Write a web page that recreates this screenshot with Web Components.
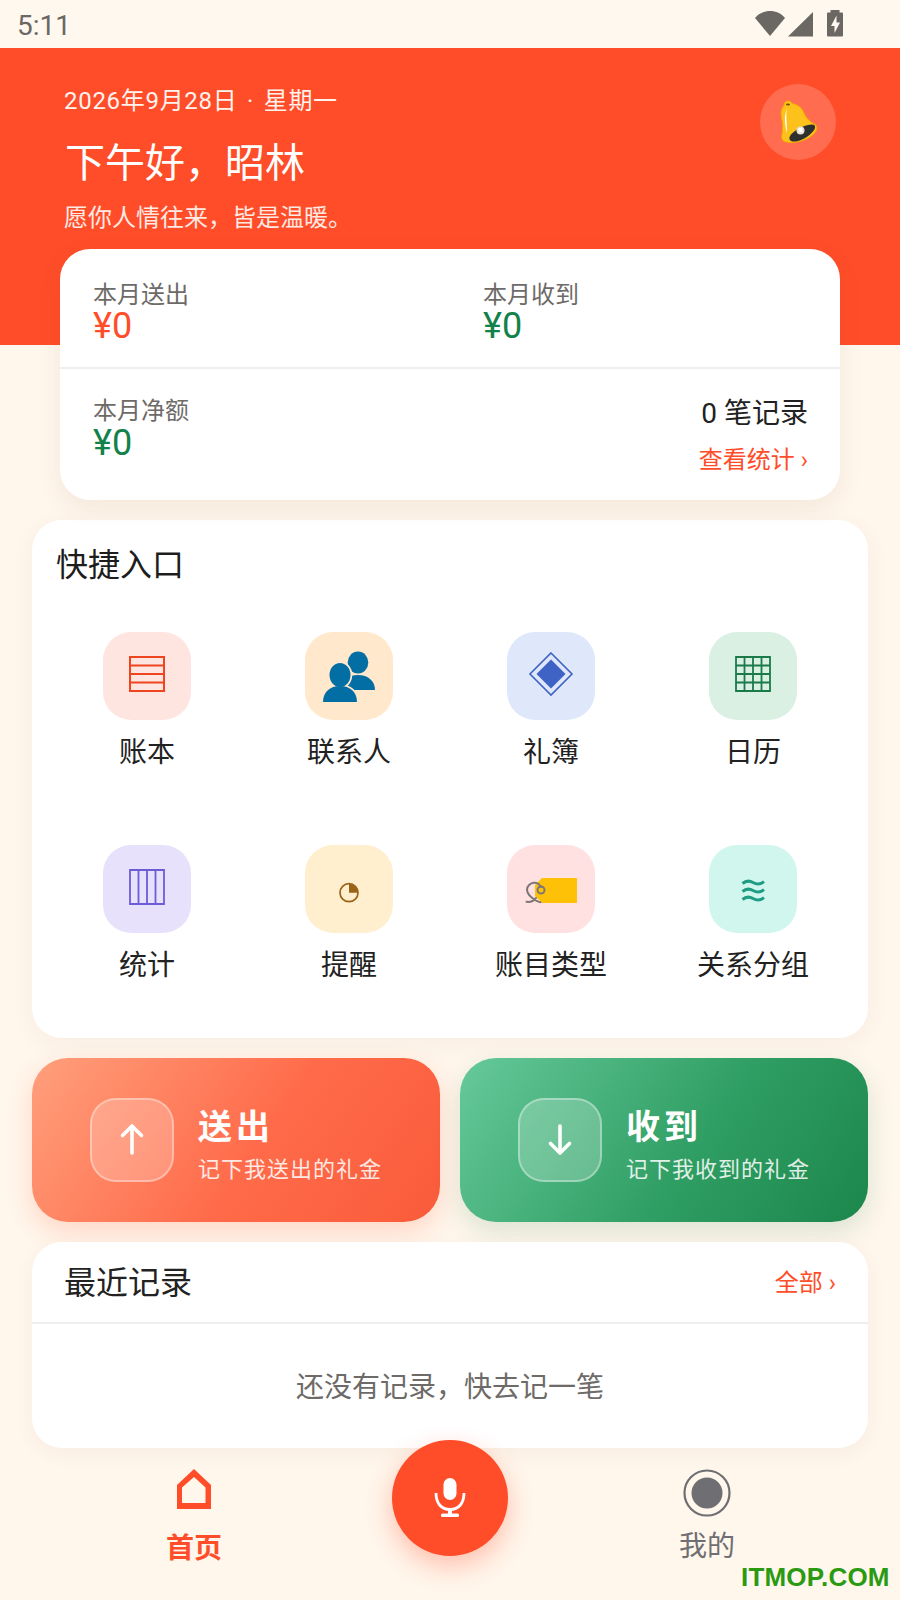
<!DOCTYPE html>
<html lang="zh">
<head>
<meta charset="utf-8">
<title>首页</title>
<style>
  html, body { margin: 0; padding: 0; background: #fff6ec; }
  body { font-family: Roboto, "Noto Sans CJK SC", sans-serif; width: 900px; height: 1600px; overflow: hidden; }
</style>
</head>
<body>
<app-shell>
  <status-bar></status-bar>
  <home-hero></home-hero>
  <summary-card></summary-card>
  <quick-panel>
    <quick-tile label="账本" bg="#ffe5df">
      <svg viewBox="0 0 88 88" fill="none" stroke="#ee4520" stroke-width="2"><path d="M27 25h34v34H27zM27 33.500h34M27 42h34M27 50.500h34"/></svg>
    </quick-tile>
    <quick-tile label="联系人" bg="#ffe8cc">
      <svg viewBox="0 0 88 88">
        <g fill="#036ea4">
          <ellipse cx="53" cy="30.500" rx="10.300" ry="11"/>
          <path d="M36 58c0-9 7-15 17-15s17 6 17 15z"/>
        </g>
        <g fill="#ffe8cc" stroke="#ffe8cc" stroke-width="3.500">
          <ellipse cx="35" cy="43" rx="10.500" ry="12"/>
          <path d="M18 70c0-10 7-16 17-16s17 6 17 16z"/>
        </g>
        <g fill="#036ea4">
          <ellipse cx="35" cy="43" rx="10.500" ry="12"/>
          <path d="M18 70c0-10 7-16 17-16s17 6 17 16z"/>
        </g>
      </svg>
    </quick-tile>
    <quick-tile label="礼簿" bg="#dfe7fb">
      <svg viewBox="0 0 88 88"><path fill="none" stroke="#3f63c4" stroke-width="1.600" d="M44 21l21 21-21 21-21-21z"/><path fill="#3f63c4" d="M44 27.500L58.500 42 44 56.500 29.500 42z"/></svg>
    </quick-tile>
    <quick-tile label="日历" bg="#d9f0e3">
      <svg viewBox="0 0 88 88" fill="none" stroke="#1a7a4a" stroke-width="1.800"><path d="M27 25h34v34H27zM27 33.500h34M27 42h34M27 50.500h34M35.500 25v34M44 25v34M52.500 25v34"/></svg>
    </quick-tile>
    <quick-tile label="统计" bg="#e7e1fb">
      <svg viewBox="0 0 88 88" fill="none" stroke="#6c5cd8" stroke-width="1.800"><path d="M27 25h34v34H27zM35.500 25v34M44 25v34M52.500 25v34"/></svg>
    </quick-tile>
    <quick-tile label="提醒" bg="#ffefcf">
      <svg viewBox="0 0 88 88"><circle cx="44" cy="47.700" r="9" fill="none" stroke="#9a6418" stroke-width="1.700"/><path fill="#9a6418" d="M44 38.700a9 9 0 0 1 9 9h-9z"/></svg>
    </quick-tile>
    <quick-tile label="账目类型" bg="#ffe1e1">
      <svg viewBox="0 0 88 88"><path fill="#ffc107" d="M35 33h34c.600 0 1 .400 1 1v23c0 .600-.400 1-1 1H35l-7-7V40z"/><circle cx="34" cy="45" r="3.500" fill="none" stroke="#7d7676" stroke-width="2"/><path fill="none" stroke="#7d7676" stroke-width="2" stroke-linecap="round" d="M34 42c-1.500-3-4-4.500-7-4.300-3.800.300-7 3.300-7 7 0 4.300 4 8 10 11.300 1.300.800 2.800 1.300 3.500 1.300M29 53c-1.500 1.700-3 3-4.500 3.500-1.200.400-3 .500-5 .300"/></svg>
    </quick-tile>
    <quick-tile label="关系分组" bg="#d1f6ee">
      <svg viewBox="0 0 88 88" fill="none" stroke="#1f9d84" stroke-width="3"><path d="M33.500 38.500c3.500-3 7-3 10.500-1s7.500 2 11-.8M33.500 46.500c3.500-3 7-3 10.500-1s7.500 2 11-.8M33.500 54.500c3.500-3 7-3 10.500-1s7.500 2 11-.8"/></svg>
    </quick-tile>
  </quick-panel>
  <action-row>
    <action-button tone="out" title="送出" sub="记下我送出的礼金"></action-button>
    <action-button tone="in" title="收到" sub="记下我收到的礼金"></action-button>
  </action-row>
  <recent-card></recent-card>
  <bottom-nav></bottom-nav>
</app-shell>

<script>
class AppShell extends HTMLElement {
  constructor() {
    super()
    this.attachShadow({ mode: "open" }).innerHTML = `
      <style>
        :host { display: block; position: relative; width: 900px; height: 1600px; overflow: hidden; background: #fff6ec; }
        .mark {
          position: absolute; left: 741px; top: 1562px;
          font: bold 26px/30px "Liberation Sans", sans-serif; letter-spacing: .2px; color: #2a9a12;
        }
      </style>
      <slot></slot>
      <div class="mark">ITMOP.COM</div>`
  }
}

class StatusBar extends HTMLElement {
  constructor() {
    super()
    this.attachShadow({ mode: "open" }).innerHTML = `
      <style>
        :host { display: flex; align-items: center; height: 48px; background: #fff8ef; color: #6b6864; box-sizing: border-box; padding: 0 54px 0 17px; }
        .time { font: 400 28px/52px Roboto, sans-serif; flex: 1; height: 48px; }
        svg { display: block; }
        .icons { display: flex; }
      </style>
      <span class="time">5:11</span>
      <div class="icons">
        <svg width="58" height="48" viewBox="0 0 58 48" fill="#6b6864">
          <path d="M0 18C3.500 13.500 9 11 15 11s11.500 2.500 15 7L15 36z"/>
          <path d="M33 36.500L58 12v24.500z"/>
        </svg>
        <svg width="22" height="48" viewBox="0 0 22 48" style="margin-left:11px">
          <path fill="#6b6864" d="M6.500 10h9v2.500H18c.500 0 1 .500 1 1v22c0 .500-.500 1-1 1H4c-.500 0-1-.500-1-1v-22c0-.500.500-1 1-1h2.500z"/>
          <path fill="#fff8ef" d="M12.500 15.500L7 26h3.500v7l5.500-10.500h-3.500z"/>
        </svg>
      </div>`
  }
}

class HomeHero extends HTMLElement {
  constructor() {
    super()
    this.attachShadow({ mode: "open" }).innerHTML = `
      <style>
        :host { display: flex; height: 297px; box-sizing: border-box; background: #ff4d29; color: #fff; padding: 35px 64px 0 64px; }
        .text { flex: 1; }
        .date { font-size: 24px; line-height: 36px; letter-spacing: .7px; color: #fff3ee; }
        .date i { font-style: normal; margin: 0 3px; }
        h1 { margin: 18px 0 0 1px; font-size: 40px; font-weight: 400; line-height: 54px; letter-spacing: 0; }
        p { margin: 10px 0 0; font-size: 24px; line-height: 34px; color: #ffe9e3; }
        .bell { width: 76px; height: 76px; margin-top: 1px; border-radius: 50%; background: #ff6c4f; display: flex; align-items: center; justify-content: center; }
      </style>
      <div class="text">
        <div class="date">2026年9月28日<i> · </i>星期一</div>
        <h1>下午好，昭林</h1>
        <p>愿你人情往来，皆是温暖。</p>
      </div>
      <div class="bell">
        <svg width="76" height="76" viewBox="0 2 76 76">
          <path fill="#fcc21b" stroke="#f2a900" stroke-width="1" d="M24 24c-.500-2.500 1.500-5 4-5 2 0 3.500 1 4 2.500 6 1 10 4.500 12 9.500 2.500 6 6.500 9 11 11.500 2 1.300 2.500 3.500 1 6.500-3 6-14 11-23 11.500-5 .300-9-.500-10.500-2.500-1-1.500-1-3.500-.500-6 1-5 1-10-.500-16-1-5-.500-9 2.500-12.500z"/>
          <path fill="#2f2f2f" d="M31 59c-2.500-1.500-2-4.500 1-7.500 5-5 14-9 20-9 2.500 0 3.500 1.300 3 3.500-1 3.500-7 9-13 11.500-4.500 2-8.500 2.700-11 1.500z"/>
          <circle cx="40.500" cy="48.500" r="4" fill="#e8e2d0"/><circle cx="40.500" cy="48" r="2.200" fill="#fff"/>
          <path fill="#fff" d="M27 27c-1.500 6 0 12 0 24-2-6-3.500-18 0-24z"/>
          <ellipse cx="28" cy="22.500" rx="2" ry="1" fill="#6b4a10"/>
        </svg>
      </div>`
  }
}

class SummaryCard extends HTMLElement {
  constructor() {
    super()
    this.attachShadow({ mode: "open" }).innerHTML = `
      <style>
        :host { display: block; position: relative; height: 251px; margin: -96px 60px 0; box-sizing: border-box; background: #fff; border-radius: 30px; box-shadow: 0 8px 24px rgba(120, 70, 30, .08); }
        .row { display: grid; grid-template-columns: 390px 1fr; padding: 0 32px 0 33px; }
        .top { height: 120px; padding-top: 33px; box-sizing: border-box; border-bottom: 2px solid #eeeeee; }
        .bottom { padding-top: 29px; }
        .label { font-size: 24px; line-height: 27px; color: #6d6a68; }
        .val { font-size: 36px; line-height: 34px; }
        .bottom .val { line-height: 36px; }
        .red { color: #ff4d29; }
        .green { color: #12824a; }
        .right { text-align: right; }
        .count { font-size: 28px; line-height: 34px; margin-top: -1px; color: #222; }
        .link { font-size: 24px; line-height: 34px; margin-top: 12px; color: #ff4d29; }
      </style>
      <div class="row top">
        <div><div class="label">本月送出</div><div class="val red">¥0</div></div>
        <div><div class="label">本月收到</div><div class="val green">¥0</div></div>
      </div>
      <div class="row bottom">
        <div><div class="label">本月净额</div><div class="val green">¥0</div></div>
        <div class="right"><div class="count">0 笔记录</div><div class="link">查看统计 ›</div></div>
      </div>`
  }
}

class QuickPanel extends HTMLElement {
  constructor() {
    super()
    this.attachShadow({ mode: "open" }).innerHTML = `
      <style>
        :host { display: block; height: 518px; margin: 20px 32px 0; box-sizing: border-box; background: #fff; border-radius: 30px; padding: 22px 14px 0; box-shadow: 0 6px 24px rgba(120, 70, 30, .05); }
        h2 { margin: 0 0 0 10px; font-size: 32px; font-weight: 400; line-height: 46px; color: #1d1d1d; }
        .grid { display: grid; grid-template-columns: repeat(4, 202px); grid-auto-rows: 213px; margin-top: 44px; }
      </style>
      <h2>快捷入口</h2>
      <div class="grid"><slot></slot></div>`
  }
}

class QuickTile extends HTMLElement {
  constructor() {
    super()
    this.attachShadow({ mode: "open" }).innerHTML = `
      <style>
        :host { display: flex; flex-direction: column; align-items: center; }
        .box { width: 88px; height: 88px; border-radius: 28px; overflow: hidden; }
        ::slotted(svg) { display: block; width: 88px; height: 88px; }
        .name { margin-top: 13px; font-size: 28px; line-height: 40px; color: #222; }
      </style>
      <div class="box"><slot></slot></div>
      <div class="name"></div>`
  }
  connectedCallback() {
    this.shadowRoot.querySelector(".box").style.background = this.getAttribute("bg")
    this.shadowRoot.querySelector(".name").textContent = this.getAttribute("label")
  }
}

class ActionRow extends HTMLElement {
  constructor() {
    super()
    this.attachShadow({ mode: "open" }).innerHTML = `
      <style>
        :host { display: grid; grid-template-columns: 408px 408px; gap: 20px; margin: 20px 32px 0; height: 164px; }
      </style>
      <slot></slot>`
  }
}

class ActionButton extends HTMLElement {
  constructor() {
    super()
    this.attachShadow({ mode: "open" }).innerHTML = `
      <style>
        :host { display: flex; align-items: center; gap: 24px; box-sizing: border-box; padding-left: 58px; border-radius: 36px; color: #fff; }
        :host([tone="out"]) { background: linear-gradient(125deg, #ff9f7c 0%, #ff6b4a 55%, #f95b3a 100%); box-shadow: 0 10px 26px rgba(255, 90, 50, .2); }
        :host([tone="in"]) { background: linear-gradient(125deg, #66c99a 0%, #2f9e63 58%, #1c864b 100%); box-shadow: 0 10px 26px rgba(30, 130, 75, .16); }
        .ic { width: 84px; height: 84px; box-sizing: border-box; border-radius: 26px; background: rgba(255, 255, 255, .22); border: 2px solid rgba(255, 255, 255, .35); display: flex; align-items: center; justify-content: center; }
        .txt { padding-top: 12px; }
        .t { font-size: 34px; line-height: 42px; font-weight: 700; letter-spacing: 4px; }
        .s { font-size: 22px; line-height: 32px; letter-spacing: 1px; margin-top: 6px; opacity: .85; }
      </style>
      <div class="ic"><svg width="40" height="40" viewBox="0 0 40 40" fill="none" stroke="#fff" stroke-width="3.600" stroke-linecap="round" stroke-linejoin="round"></svg></div>
      <div class="txt"><div class="t"></div><div class="s"></div></div>`
  }
  connectedCallback() {
    this.shadowRoot.querySelector(".t").textContent = this.getAttribute("title")
    this.shadowRoot.querySelector(".s").textContent = this.getAttribute("sub")
    this.removeAttribute("title")
    const path = this.getAttribute("tone") === "out" ? "M20 6v27M10.500 15.500L20 6l9.500 9.500" : "M20 6v27M10.500 23.500L20 33l9.500-9.500"
    this.shadowRoot.querySelector("svg").innerHTML = `<path d="${path}"/>`
  }
}

class RecentCard extends HTMLElement {
  constructor() {
    super()
    this.attachShadow({ mode: "open" }).innerHTML = `
      <style>
        :host { display: block; position: relative; height: 206px; margin: 20px 32px 0; background: #fff; border-radius: 30px; box-shadow: 0 6px 20px rgba(120, 70, 30, .05); }
        .head { display: flex; align-items: center; justify-content: space-between; height: 82px; box-sizing: border-box; padding: 0 32px 4px; border-bottom: 2px solid #eeeeee; }
        h2 { margin: 0; font-size: 32px; font-weight: 400; color: #222; }
        a { font-size: 24px; color: #ff4d29; }
        .empty { height: 122px; display: flex; align-items: center; justify-content: center; font-size: 28px; color: #6d6a68; }
      </style>
      <div class="head"><h2>最近记录</h2><a>全部 ›</a></div>
      <div class="empty">还没有记录，快去记一笔</div>`
  }
}

class BottomNav extends HTMLElement {
  constructor() {
    super()
    this.attachShadow({ mode: "open" }).innerHTML = `
      <style>
        :host { display: grid; grid-template-columns: 1fr 128px 1fr; height: 152px; background: #fff6ec; }
        .item { display: flex; flex-direction: column; align-items: center; padding-top: 21px; }
        .item svg { display: block; }
        .home { padding-left: 2px; }
        .home span { margin-top: 20px; font-size: 28px; line-height: 40px; font-weight: 700; color: #ff4d29; }
        .me span { margin-top: 10px; font-size: 28px; line-height: 40px; color: #6f6e72; }
        .fab { width: 116px; height: 116px; margin: -8px auto 0; position: relative; border-radius: 50%; background: #ff4d29; box-shadow: 0 10px 26px rgba(255, 77, 41, .32); display: flex; align-items: center; justify-content: center; }
      </style>
      <div class="item home">
        <svg width="34" height="40" viewBox="0 0 34 40"><path fill="#ff4d29" fill-rule="evenodd" d="M17 0L34 16V40H0V16zM17 8L5 18.500V34H28.500V18.500z"/></svg>
        <span>首页</span>
      </div>
      <div class="fab">
        <svg width="40" height="40" viewBox="0 0 40 40">
          <rect x="13.500" y="0" width="13" height="22" rx="6.500" fill="#fff"/>
          <path d="M6 15c0 10 5 16.500 14 16.500S34 25 34 15" fill="none" stroke="#fff" stroke-width="2.800"/>
          <path d="M20 31v5" stroke="#fff" stroke-width="4"/>
          <rect x="11" y="35.500" width="18" height="3.600" rx="1.500" fill="#fff"/>
        </svg>
      </div>
      <div class="item me">
        <svg width="48" height="48" viewBox="0 0 48 48"><circle cx="24" cy="24" r="22.500" fill="none" stroke="#6f6e72" stroke-width="2.200"/><circle cx="24" cy="24" r="15.500" fill="#6f6e72"/></svg>
        <span>我的</span>
      </div>`
  }
}

customElements.define("app-shell", AppShell)
customElements.define("status-bar", StatusBar)
customElements.define("home-hero", HomeHero)
customElements.define("summary-card", SummaryCard)
customElements.define("quick-panel", QuickPanel)
customElements.define("quick-tile", QuickTile)
customElements.define("action-row", ActionRow)
customElements.define("action-button", ActionButton)
customElements.define("recent-card", RecentCard)
customElements.define("bottom-nav", BottomNav)
</script>
</body>
</html>
